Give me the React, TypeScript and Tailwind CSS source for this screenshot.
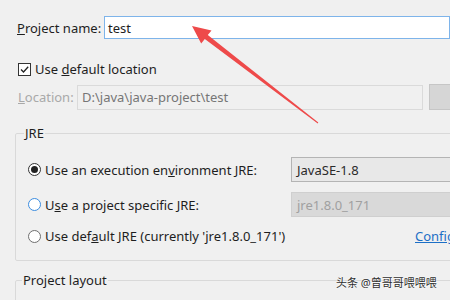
import React from 'react';

const font = { fontFamily: '"Noto Sans", "Noto Sans CJK SC", sans-serif' };

/** Classic Windows-style radio button. */
const Radio = ({ checked, tone }: { checked?: boolean; tone: 'dark' | 'blue' | 'grey' }) => {
  const ring =
    tone === 'blue' ? 'border-[#3c8de0]' : tone === 'grey' ? 'border-[#6f6f6f]' : 'border-[#333333]';
  return (
    <span
      className={`w-[13px] h-[13px] rounded-full border ${ring} bg-white flex items-center justify-center shrink-0`}
    >
      {checked && <span className="w-[7px] h-[7px] rounded-full bg-[#222222]" />}
    </span>
  );
};

export default function App() {
  return (
    <div
      className="relative w-[450px] h-[300px] overflow-hidden bg-[#f0f0f0] text-[13px] leading-[16px] text-[#1e1e1e]"
      style={font}
    >
      {/* Project name */}
      <div className="flex items-center pt-[16px]">
        <span className="pl-[17px] w-[104px] shrink-0">
          <span className="underline">P</span>roject name:
        </span>
        <div className="flex-1 h-[23px] border border-[#7eb4ea] bg-white flex items-center pl-[3px]">
          test
        </div>
      </div>

      {/* Default location checkbox */}
      <div className="flex items-center h-[14px] mt-[23px] pl-[18px] gap-[4px]">
        <span className="w-[13px] h-[13px] border border-[#333333] bg-white flex items-center justify-center">
          <svg viewBox="0 0 11 11" className="w-[11px] h-[11px]">
            <path d="M2 5.5 L4.5 8 L9.2 2.8" fill="none" stroke="#222" strokeWidth="1.3" />
          </svg>
        </span>
        <span>
          Use <span className="underline">d</span>efault location
        </span>
      </div>

      {/* Location */}
      <div className="flex items-center mt-[8px]">
        <span className="pl-[18px] w-[77px] shrink-0 text-[#a9a9a9]">
          <span className="underline">L</span>ocation:
        </span>
        <div className="w-[346px] shrink-0 h-[25px] border border-[#dadada] bg-[#f0f0f0] flex items-center pl-[4px] text-[#767676]">
          D:\java\java-project\test
        </div>
        <div className="ml-[6px] w-[40px] shrink-0 h-[26px] border border-[#c6c6c6] bg-[#d6d6d6]" />
      </div>

      {/* JRE group */}
      <fieldset className="ml-[15px] mt-[15px] w-[460px] border border-[#d9d9d9] rounded-[2px] pl-[12px] pb-[16px]">
        <legend className="-ml-[4px] px-[1px] text-[#1e1e1e]">JRE</legend>

        <div className="flex items-center mt-[16px] h-[25px]">
          <div className="w-[263px] shrink-0 flex items-center gap-[4px]">
            <Radio checked tone="dark" />
            <span>
              Use an execution en<span className="underline">v</span>ironment JRE:
            </span>
          </div>
          <div className="w-[200px] shrink-0 h-[25px] border border-[#b4b4b4] bg-[#e8e8e8] flex items-center pl-[5px] text-[#2a2a2a]">
            JavaSE-1.8
          </div>
        </div>

        <div className="flex items-center mt-[10px] h-[25px]">
          <div className="w-[263px] shrink-0 flex items-center gap-[4px]">
            <Radio tone="blue" />
            <span>
              U<span className="underline">s</span>e a project specific JRE:
            </span>
          </div>
          <div className="w-[200px] shrink-0 h-[25px] border border-[#cfcfcf] bg-[#d9d9d9] flex items-center pl-[5px] text-[#a0a0a0]">
            jre1.8.0_171
          </div>
        </div>

        <div className="flex items-center mt-[11px] h-[16px]">
          <div className="w-[387px] shrink-0 flex items-center gap-[4px]">
            <Radio tone="grey" />
            <span>
              Use def<span className="underline">a</span>ult JRE (currently &#39;jre1.8.0_171&#39;)
            </span>
          </div>
          <span className="text-[#1c6fc6] underline whitespace-nowrap">Configure JREs...</span>
        </div>
      </fieldset>

      {/* Project layout group */}
      <fieldset className="ml-[15px] mt-[11px] w-[460px] h-[60px] border border-[#d9d9d9] rounded-[2px]">
        <legend className="ml-[6px] px-[1px]">Project layout</legend>
      </fieldset>

      {/* Red annotation arrow */}
      <svg className="absolute inset-0 w-[450px] h-[300px] pointer-events-none" viewBox="0 0 450 300">
        <polygon
          points="192,26 211.5,30.5 207.8,35 318.3,122.6 317.7,123.4 204.8,39 201.2,43.5"
          fill="#ee4a4a"
        />
      </svg>

      {/* Watermark */}
      <span
        className="absolute left-[336px] top-[276px] text-[11px] leading-[14px] text-[#2e2e2e] whitespace-nowrap"
        style={{ ...font, textShadow: '0 0 2px #fff, 0 0 2px #fff' }}
      >
        头条 @曾哥哥喂喂喂
      </span>
    </div>
  );
}
